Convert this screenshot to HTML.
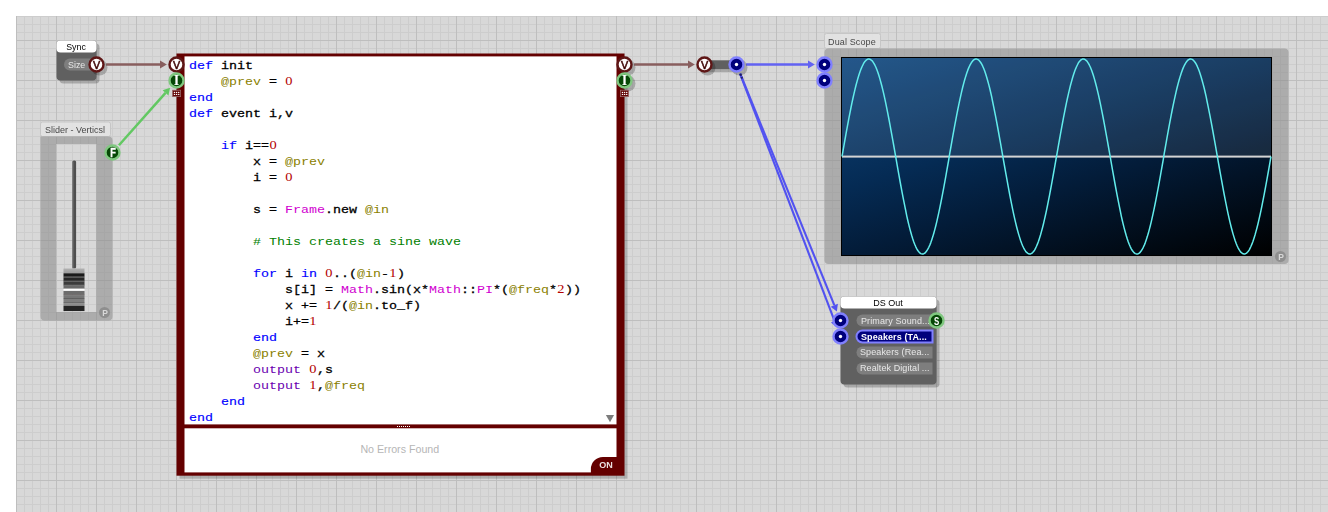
<!DOCTYPE html>
<html><head><meta charset="utf-8"><title>Ruby sine wave schematic</title>
<style>
html,body{margin:0;padding:0;background:#fff;}
body{width:1328px;height:512px;overflow:hidden;position:relative;font-family:"Liberation Sans",sans-serif;}
#cv{position:absolute;left:16px;top:16px;width:1312px;height:496px;background-color:#d8d8d8;
background-image:
 linear-gradient(to right,#bebebe 1px,transparent 1px),
 linear-gradient(to bottom,#bebebe 1px,transparent 1px),
 linear-gradient(to right,#cdcdcd 1px,transparent 1px),
 linear-gradient(to bottom,#cdcdcd 1px,transparent 1px);
background-size:40px 40px,40px 40px,8px 8px,8px 8px;
background-position:0 0,0 24px,0 0,0 0;}
.abs{position:absolute;}
.t{position:absolute;white-space:nowrap;font-size:9px;line-height:12px;will-change:transform;}
pre{margin:0;position:absolute;left:189.0px;top:58.3px;font-family:"Liberation Mono",monospace;font-size:11.6px;line-height:16px;color:#000;transform:scaleX(1.1494);transform-origin:0 0;}
pre div{height:16px;white-space:pre;}
pre{-webkit-text-stroke:0.28px #000;}
pre b{font-weight:normal;-webkit-text-stroke:0 transparent;}
.k{color:#0000ff;-webkit-text-stroke:0.15px #0000ff;} .a{color:#8a8000;} .n{color:#b40000;font-family:"Liberation Serif",serif;font-size:12.6px;line-height:0;margin:0 0.33px;} .c{color:#d000d0;} .m{color:#008000;} .o{color:#6a00b0;}
</style></head><body>
<div id="cv"></div>
<svg class="abs" style="left:0;top:0;" width="1328" height="512" viewBox="0 0 1328 512">
<defs>
<linearGradient id="sg" gradientUnits="userSpaceOnUse" x1="1010.6" y1="6.5" x2="1102.4" y2="306.5">
<stop offset="0" stop-color="rgb(16,72,128)"/><stop offset="0.4" stop-color="rgb(5,43,84)"/><stop offset="0.6" stop-color="rgb(3,28,57)"/><stop offset="1" stop-color="rgb(0,0,0)"/>
</linearGradient>
<linearGradient id="kt" x1="0" y1="0" x2="0" y2="1"><stop offset="0" stop-color="#b2b2b2"/><stop offset="1" stop-color="#9a9a9a"/></linearGradient>
</defs>
<rect x="59.5" y="43.5" width="40" height="40" rx="4" ry="4" fill="#000" fill-opacity="0.22"/>
<rect x="56.5" y="40.5" width="40" height="40" rx="4" ry="4" fill="#606060"/>
<rect x="56.5" y="40.5" width="40" height="12" rx="4" ry="4" fill="#fff"/>
<path d="M70 58.5 H96.5 V70.5 H70 A6 6 0 0 1 70 58.5 Z" fill="#7e7e7e"/>
<rect x="40.5" y="122" width="70" height="14.5" rx="2" ry="2" fill="#e3e3e3" fill-opacity="0.92" stroke="#c6c6c6" stroke-width="1"/>
<path fill-rule="evenodd" fill="#8b8b8b" fill-opacity="0.58" d="M40.5 136.5 H108.5 A4 4 0 0 1 112.5 140.5 V316.5 A4 4 0 0 1 108.5 320.5 H44.5 A4 4 0 0 1 40.5 316.5 Z M56 144 V312 H96.5 V144 Z"/>
<rect x="72.4" y="160.5" width="3.7" height="108" rx="1.5" fill="#4e4e4e"/>
<rect x="72.4" y="161.5" width="1" height="107" fill="#7a7a7a"/>
<rect x="63.5" y="268.5" width="21" height="4.85" fill="url(#kt)"/><rect x="63.5" y="273.3" width="21" height="3.45" fill="#1a1a1a"/><rect x="63.5" y="276.7" width="21" height="1.05" fill="#4a4a4a"/><rect x="63.5" y="277.7" width="21" height="3.15" fill="#262626"/><rect x="63.5" y="280.8" width="21" height="0.75" fill="#484848"/><rect x="63.5" y="281.5" width="21" height="3.35" fill="#3c3c3c"/><rect x="63.5" y="284.8" width="21" height="0.75" fill="#2a2a2a"/><rect x="63.5" y="285.5" width="21" height="3.25" fill="#6a6a6a"/><rect x="63.5" y="288.7" width="21" height="2.25" fill="#ffffff"/><rect x="63.5" y="290.9" width="21" height="3.65" fill="#6c6c6c"/><rect x="63.5" y="294.5" width="21" height="0.65" fill="#484040"/><rect x="63.5" y="295.1" width="21" height="3.25" fill="#767676"/><rect x="63.5" y="298.3" width="21" height="0.75" fill="#3c3c3c"/><rect x="63.5" y="299.0" width="21" height="3.45" fill="#7e7e7e"/><rect x="63.5" y="302.4" width="21" height="0.75" fill="#404040"/><rect x="63.5" y="303.1" width="21" height="2.85" fill="#8c8c8c"/><rect x="63.5" y="305.9" width="21" height="5.15" fill="#242424"/>
<circle cx="104.5" cy="312.5" r="5.5" fill="#8e8e8e"/>
<rect x="179.5" y="56.5" width="448" height="422.2" fill="#000" fill-opacity="0.19"/>
<rect x="176.5" y="53.5" width="448" height="422.2" fill="#640000"/>
<rect x="184.5" y="56.4" width="432" height="368" fill="#fff"/>
<rect x="184.5" y="428.3" width="432" height="44.1" fill="#fff"/>
<path d="M590.9 473 L590.9 469 A12 12 0 0 1 602.9 456.9 L618 456.9 L618 473 Z" fill="#640000"/>
<polygon points="605.9,415 614.1,415 610,422.2" fill="#7c7c7c"/>
<rect x="397" y="426" width="1" height="1" fill="#fff"/>
<rect x="399" y="426" width="1" height="1" fill="#fff"/>
<rect x="401" y="426" width="1" height="1" fill="#fff"/>
<rect x="403" y="426" width="1" height="1" fill="#fff"/>
<rect x="405" y="426" width="1" height="1" fill="#fff"/>
<rect x="407" y="426" width="1" height="1" fill="#fff"/>
<rect x="409" y="426" width="1" height="1" fill="#fff"/>
<rect x="707.5" y="63.3" width="32" height="8.8" fill="#000" fill-opacity="0.22"/>
<rect x="704.5" y="60.3" width="32" height="8.8" fill="#606060"/>
<rect x="824.5" y="33.5" width="56" height="15" rx="2" ry="2" fill="#e3e3e3" fill-opacity="0.92" stroke="#c6c6c6" stroke-width="1"/>
<rect x="824.5" y="48.5" width="464" height="215.5" rx="4" ry="4" fill="#8b8b8b" fill-opacity="0.58"/>
<rect x="841" y="57" width="431" height="199" fill="#000"/>
<rect x="842" y="58" width="429" height="197" fill="url(#sg)"/>
<rect x="842" y="58" width="429" height="98" fill="#fff" fill-opacity="0.087"/>
<rect x="842" y="155.6" width="429" height="2" fill="#d4d4d4"/>
<circle cx="1280.5" cy="256.5" r="5.5" fill="#8e8e8e"/>
<rect x="843.5" y="299.5" width="96" height="88" rx="4" ry="4" fill="#000" fill-opacity="0.22"/>
<rect x="840.5" y="296.5" width="96" height="88" rx="4" ry="4" fill="#606060"/>
<rect x="840.5" y="296.5" width="96" height="12" rx="4" ry="4" fill="#fff"/>
<path d="M862.5 314.5 H932.5 V326.5 H862.5 A6 6 0 0 1 862.5 314.5 Z" fill="#7e7e7e"/>
<path d="M862.5 346.5 H932.5 V358.5 H862.5 A6 6 0 0 1 862.5 346.5 Z" fill="#7e7e7e"/>
<path d="M862.5 362.5 H932.5 V374.5 H862.5 A6 6 0 0 1 862.5 362.5 Z" fill="#7e7e7e"/>
<path d="M862.5 330.5 H932.5 V342.5 H862.5 A6 6 0 0 1 862.5 330.5 Z" fill="#00007c" stroke="#8080ff" stroke-width="2"/>
</svg>

<!-- module labels -->
<div class="t" style="left:56.2px;top:40.5px;width:40px;text-align:center;color:#000;font-size:8.8px;">Sync</div>
<div class="t" style="left:68.2px;top:58.5px;color:#e8e8e8;font-size:8.9px;">Size</div>
<div class="t" style="left:44.5px;top:123.5px;color:#484848;">Slider - Verticsl</div>
<div class="t" style="left:101.5px;top:306.5px;width:6px;text-align:center;color:#d8d8d8;font-weight:bold;font-size:8.5px;">P</div>
<div class="t" style="left:827.8px;top:36px;color:#484848;letter-spacing:0.13px;">Dual Scope</div>
<div class="t" style="left:1277.5px;top:250.5px;width:6px;text-align:center;color:#d8d8d8;font-weight:bold;font-size:8.5px;">P</div>
<div class="t" style="left:839.5px;top:296.9px;width:96px;text-align:center;color:#000;">DS Out</div>
<div class="t" style="left:860.5px;top:314.7px;color:#e8e8e8;letter-spacing:0.12px;">Primary Sound...</div>
<div class="t" style="left:860.6px;top:330.5px;color:#fff;font-weight:bold;letter-spacing:0.1px;">Speakers (TA...</div>
<div class="t" style="left:859.8px;top:346.3px;color:#e8e8e8;letter-spacing:0.12px;">Speakers (Rea...</div>
<div class="t" style="left:859.8px;top:362.4px;color:#e8e8e8;letter-spacing:0.08px;">Realtek Digital ...</div>

<!-- Ruby code -->
<pre><div><b class="k">def</b> init</div><div>    <b class="a">@prev</b> = <b class="n">0</b></div><div><b class="k">end</b></div><div><b class="k">def</b> event i,v</div><div></div><div>    <b class="k">if</b> i==<b class="n">0</b></div><div>        x = <b class="a">@prev</b></div><div>        i = <b class="n">0</b></div><div></div><div>        s = <b class="c">Frame</b>.new <b class="a">@in</b></div><div></div><div>        <b class="m"># This creates a sine wave</b></div><div></div><div>        <b class="k">for</b> i <b class="k">in</b> <b class="n">0</b>..(<b class="a">@in</b>-<b class="n">1</b>)</div><div>            s[i] = <b class="c">Math</b>.sin(x*<b class="c">Math</b>::<b class="c">PI</b>*(<b class="a">@freq</b>*<b class="n">2</b>))</div><div>            x += <b class="n">1</b>/(<b class="a">@in</b>.to_f)</div><div>            i+=<b class="n">1</b></div><div>        <b class="k">end</b></div><div>        <b class="a">@prev</b> = x</div><div>        <b class="o">output</b> <b class="n">0</b>,s</div><div>        <b class="o">output</b> <b class="n">1</b>,<b class="a">@freq</b></div><div>    <b class="k">end</b></div><div><b class="k">end</b></div></pre>
<div class="abs" style="left:183.8px;top:443px;width:432px;text-align:center;font-size:10.67px;color:#b6b6b6;line-height:12px;">No Errors Found</div>
<div class="t" style="left:599px;top:459px;width:14px;color:#ece2e2;font-weight:bold;text-align:center;">ON</div>

<svg class="abs" style="left:0;top:0;will-change:transform;" width="1328" height="512" viewBox="0 0 1328 512">
<path d="M842.0,156.5 L843.0,150.8 L844.0,145.1 L845.0,139.5 L846.0,133.9 L847.0,128.4 L848.0,123.0 L849.0,117.7 L850.0,112.6 L851.0,107.5 L852.0,102.7 L853.0,98.0 L854.0,93.6 L855.0,89.3 L856.0,85.3 L857.0,81.6 L858.0,78.0 L859.0,74.8 L860.0,71.8 L861.0,69.1 L862.0,66.8 L863.0,64.7 L863.9,62.9 L864.9,61.5 L865.9,60.4 L866.9,59.6 L867.9,59.1 L868.9,59.0 L869.9,59.2 L870.9,59.8 L871.9,60.6 L872.9,61.8 L873.9,63.3 L874.9,65.2 L875.9,67.3 L876.9,69.8 L877.9,72.5 L878.9,75.6 L879.9,78.9 L880.9,82.5 L881.9,86.3 L882.9,90.4 L883.9,94.7 L884.9,99.2 L885.9,103.9 L886.9,108.8 L887.9,113.8 L888.9,119.0 L889.9,124.3 L890.9,129.8 L891.9,135.3 L892.9,140.9 L893.9,146.5 L894.9,152.2 L895.9,157.9 L896.9,163.6 L897.9,169.3 L898.9,174.9 L899.9,180.5 L900.9,186.0 L901.9,191.3 L902.9,196.6 L903.9,201.7 L904.9,206.7 L905.9,211.5 L906.8,216.1 L907.8,220.5 L908.8,224.7 L909.8,228.6 L910.8,232.3 L911.8,235.8 L912.8,239.0 L913.8,241.9 L914.8,244.5 L915.8,246.8 L916.8,248.8 L917.8,250.5 L918.8,251.8 L919.8,252.9 L920.8,253.6 L921.8,253.9 L922.8,254.0 L923.8,253.7 L924.8,253.1 L925.8,252.1 L926.8,250.8 L927.8,249.2 L928.8,247.3 L929.8,245.1 L930.8,242.6 L931.8,239.7 L932.8,236.6 L933.8,233.2 L934.8,229.6 L935.8,225.7 L936.8,221.6 L937.8,217.2 L938.8,212.7 L939.8,207.9 L940.8,203.0 L941.8,197.9 L942.8,192.7 L943.8,187.3 L944.8,181.8 L945.8,176.3 L946.8,170.7 L947.8,165.0 L948.8,159.3 L949.7,153.7 L950.7,148.0 L951.7,142.3 L952.7,136.7 L953.7,131.2 L954.7,125.7 L955.7,120.3 L956.7,115.1 L957.7,110.0 L958.7,105.1 L959.7,100.3 L960.7,95.8 L961.7,91.4 L962.7,87.3 L963.7,83.4 L964.7,79.8 L965.7,76.4 L966.7,73.3 L967.7,70.4 L968.7,67.9 L969.7,65.7 L970.7,63.8 L971.7,62.2 L972.7,60.9 L973.7,59.9 L974.7,59.3 L975.7,59.0 L976.7,59.1 L977.7,59.4 L978.7,60.1 L979.7,61.2 L980.7,62.5 L981.7,64.2 L982.7,66.2 L983.7,68.5 L984.7,71.1 L985.7,74.0 L986.7,77.2 L987.7,80.7 L988.7,84.4 L989.7,88.3 L990.7,92.5 L991.7,96.9 L992.6,101.5 L993.6,106.3 L994.6,111.3 L995.6,116.4 L996.6,121.7 L997.6,127.0 L998.6,132.5 L999.6,138.1 L1000.6,143.7 L1001.6,149.4 L1002.6,155.1 L1003.6,160.8 L1004.6,166.5 L1005.6,172.1 L1006.6,177.7 L1007.6,183.2 L1008.6,188.7 L1009.6,194.0 L1010.6,199.2 L1011.6,204.2 L1012.6,209.1 L1013.6,213.8 L1014.6,218.3 L1015.6,222.6 L1016.6,226.7 L1017.6,230.5 L1018.6,234.1 L1019.6,237.4 L1020.6,240.5 L1021.6,243.2 L1022.6,245.7 L1023.6,247.8 L1024.6,249.7 L1025.6,251.2 L1026.6,252.4 L1027.6,253.2 L1028.6,253.8 L1029.6,254.0 L1030.6,253.9 L1031.6,253.4 L1032.6,252.6 L1033.6,251.5 L1034.6,250.1 L1035.5,248.3 L1036.5,246.2 L1037.5,243.9 L1038.5,241.2 L1039.5,238.2 L1040.5,235.0 L1041.5,231.4 L1042.5,227.7 L1043.5,223.7 L1044.5,219.4 L1045.5,215.0 L1046.5,210.3 L1047.5,205.5 L1048.5,200.4 L1049.5,195.3 L1050.5,190.0 L1051.5,184.6 L1052.5,179.1 L1053.5,173.5 L1054.5,167.9 L1055.5,162.2 L1056.5,156.5 L1057.5,150.8 L1058.5,145.1 L1059.5,139.5 L1060.5,133.9 L1061.5,128.4 L1062.5,123.0 L1063.5,117.7 L1064.5,112.6 L1065.5,107.5 L1066.5,102.7 L1067.5,98.0 L1068.5,93.6 L1069.5,89.3 L1070.5,85.3 L1071.5,81.6 L1072.5,78.0 L1073.5,74.8 L1074.5,71.8 L1075.5,69.1 L1076.5,66.8 L1077.5,64.7 L1078.4,62.9 L1079.4,61.5 L1080.4,60.4 L1081.4,59.6 L1082.4,59.1 L1083.4,59.0 L1084.4,59.2 L1085.4,59.8 L1086.4,60.6 L1087.4,61.8 L1088.4,63.3 L1089.4,65.2 L1090.4,67.3 L1091.4,69.8 L1092.4,72.5 L1093.4,75.6 L1094.4,78.9 L1095.4,82.5 L1096.4,86.3 L1097.4,90.4 L1098.4,94.7 L1099.4,99.2 L1100.4,103.9 L1101.4,108.8 L1102.4,113.8 L1103.4,119.0 L1104.4,124.3 L1105.4,129.8 L1106.4,135.3 L1107.4,140.9 L1108.4,146.5 L1109.4,152.2 L1110.4,157.9 L1111.4,163.6 L1112.4,169.3 L1113.4,174.9 L1114.4,180.5 L1115.4,186.0 L1116.4,191.3 L1117.4,196.6 L1118.4,201.7 L1119.4,206.7 L1120.4,211.5 L1121.3,216.1 L1122.3,220.5 L1123.3,224.7 L1124.3,228.6 L1125.3,232.3 L1126.3,235.8 L1127.3,239.0 L1128.3,241.9 L1129.3,244.5 L1130.3,246.8 L1131.3,248.8 L1132.3,250.5 L1133.3,251.8 L1134.3,252.9 L1135.3,253.6 L1136.3,253.9 L1137.3,254.0 L1138.3,253.7 L1139.3,253.1 L1140.3,252.1 L1141.3,250.8 L1142.3,249.2 L1143.3,247.3 L1144.3,245.1 L1145.3,242.6 L1146.3,239.7 L1147.3,236.6 L1148.3,233.2 L1149.3,229.6 L1150.3,225.7 L1151.3,221.6 L1152.3,217.2 L1153.3,212.7 L1154.3,207.9 L1155.3,203.0 L1156.3,197.9 L1157.3,192.7 L1158.3,187.3 L1159.3,181.8 L1160.3,176.3 L1161.3,170.7 L1162.3,165.0 L1163.3,159.3 L1164.2,153.7 L1165.2,148.0 L1166.2,142.3 L1167.2,136.7 L1168.2,131.2 L1169.2,125.7 L1170.2,120.3 L1171.2,115.1 L1172.2,110.0 L1173.2,105.1 L1174.2,100.3 L1175.2,95.8 L1176.2,91.4 L1177.2,87.3 L1178.2,83.4 L1179.2,79.8 L1180.2,76.4 L1181.2,73.3 L1182.2,70.4 L1183.2,67.9 L1184.2,65.7 L1185.2,63.8 L1186.2,62.2 L1187.2,60.9 L1188.2,59.9 L1189.2,59.3 L1190.2,59.0 L1191.2,59.1 L1192.2,59.4 L1193.2,60.1 L1194.2,61.2 L1195.2,62.5 L1196.2,64.2 L1197.2,66.2 L1198.2,68.5 L1199.2,71.1 L1200.2,74.0 L1201.2,77.2 L1202.2,80.7 L1203.2,84.4 L1204.2,88.3 L1205.2,92.5 L1206.2,96.9 L1207.1,101.5 L1208.1,106.3 L1209.1,111.3 L1210.1,116.4 L1211.1,121.7 L1212.1,127.0 L1213.1,132.5 L1214.1,138.1 L1215.1,143.7 L1216.1,149.4 L1217.1,155.1 L1218.1,160.8 L1219.1,166.5 L1220.1,172.1 L1221.1,177.7 L1222.1,183.2 L1223.1,188.7 L1224.1,194.0 L1225.1,199.2 L1226.1,204.2 L1227.1,209.1 L1228.1,213.8 L1229.1,218.3 L1230.1,222.6 L1231.1,226.7 L1232.1,230.5 L1233.1,234.1 L1234.1,237.4 L1235.1,240.5 L1236.1,243.2 L1237.1,245.7 L1238.1,247.8 L1239.1,249.7 L1240.1,251.2 L1241.1,252.4 L1242.1,253.2 L1243.1,253.8 L1244.1,254.0 L1245.1,253.9 L1246.1,253.4 L1247.1,252.6 L1248.1,251.5 L1249.1,250.1 L1250.0,248.3 L1251.0,246.2 L1252.0,243.9 L1253.0,241.2 L1254.0,238.2 L1255.0,235.0 L1256.0,231.4 L1257.0,227.7 L1258.0,223.7 L1259.0,219.4 L1260.0,215.0 L1261.0,210.3 L1262.0,205.5 L1263.0,200.4 L1264.0,195.3 L1265.0,190.0 L1266.0,184.6 L1267.0,179.1 L1268.0,173.5 L1269.0,167.9 L1270.0,162.2 L1271.0,156.5" fill="none" stroke="#62ecec" stroke-width="1.5" stroke-linejoin="round"/>
<line x1="106.20" y1="64.50" x2="160.00" y2="64.50" stroke="#885e5e" stroke-width="2.5"/><polygon points="166.80,64.50 160.00,68.40 160.00,60.60" fill="#885e5e"/>
<line x1="634.20" y1="64.50" x2="688.00" y2="64.50" stroke="#885e5e" stroke-width="2.5"/><polygon points="694.80,64.50 688.00,68.40 688.00,60.60" fill="#885e5e"/>
<line x1="118.94" y1="145.25" x2="165.54" y2="92.83" stroke="#62c862" stroke-width="2.5"/><polygon points="170.06,87.75 168.45,95.42 162.62,90.24" fill="#62c862"/>
<line x1="746.20" y1="64.50" x2="808.00" y2="64.50" stroke="#6262f2" stroke-width="2.5"/><polygon points="814.80,64.50 808.00,68.40 808.00,60.60" fill="#6262f2"/>
<line x1="740.15" y1="73.49" x2="834.29" y2="305.21" stroke="#5252f0" stroke-width="2.1"/><polygon points="836.85,311.51 830.68,306.68 837.90,303.75" fill="#5252f0"/>
<line x1="739.96" y1="73.56" x2="834.61" y2="321.09" stroke="#5252f0" stroke-width="2.1"/><polygon points="837.04,327.44 830.96,322.48 838.25,319.70" fill="#5252f0"/>
<line x1="740.3" y1="73.8" x2="742.3" y2="78.7" stroke="#1c1c60" stroke-width="2.2" stroke-opacity="0.8" stroke-dasharray="2.2 1.2"/>
<circle cx="99.5" cy="67.5" r="8" fill="#000" fill-opacity="0.22"/><circle cx="96.5" cy="64.5" r="7" fill="#fff" stroke="#5e1616" stroke-width="2.4"/><text x="96.5" y="68.5" text-anchor="middle" font-family="Liberation Sans, sans-serif" font-size="10.8" fill="#400808" stroke="#400808" stroke-width="0.55">V</text>
<circle cx="176.5" cy="64.5" r="7" fill="#fff" stroke="#5e1616" stroke-width="2.4"/><text x="176.5" y="68.5" text-anchor="middle" font-family="Liberation Sans, sans-serif" font-size="10.8" fill="#400808" stroke="#400808" stroke-width="0.55">V</text>
<circle cx="176.5" cy="80.5" r="7" fill="#064806" stroke="#80c880" stroke-width="2.4"/><text x="176.5" y="85.3" text-anchor="middle" font-family="Liberation Serif, serif" font-weight="bold" font-size="14.2" fill="#fff">I</text>
<circle cx="627.5" cy="67.5" r="8" fill="#000" fill-opacity="0.22"/><circle cx="624.5" cy="64.5" r="7" fill="#fff" stroke="#5e1616" stroke-width="2.4"/><text x="624.5" y="68.5" text-anchor="middle" font-family="Liberation Sans, sans-serif" font-size="10.8" fill="#400808" stroke="#400808" stroke-width="0.55">V</text>
<circle cx="627.5" cy="83.5" r="8" fill="#000" fill-opacity="0.22"/><circle cx="624.5" cy="80.5" r="7" fill="#064806" stroke="#80c880" stroke-width="2.4"/><text x="624.5" y="85.3" text-anchor="middle" font-family="Liberation Serif, serif" font-weight="bold" font-size="14.2" fill="#fff">I</text>
<circle cx="112.5" cy="152.5" r="7" fill="#064806" stroke="#80c880" stroke-width="2.4"/><text transform="translate(113.1,157.0) scale(0.74,1)" text-anchor="middle" font-family="Liberation Sans, sans-serif" font-weight="bold" font-size="12.4" fill="#fff" stroke="#fff" stroke-width="0.35">F</text>
<circle cx="707.5" cy="67.5" r="8" fill="#000" fill-opacity="0.22"/><circle cx="704.5" cy="64.5" r="7" fill="#fff" stroke="#5e1616" stroke-width="2.4"/><text x="704.5" y="68.5" text-anchor="middle" font-family="Liberation Sans, sans-serif" font-size="10.8" fill="#400808" stroke="#400808" stroke-width="0.55">V</text>
<circle cx="739.5" cy="67.5" r="8" fill="#000" fill-opacity="0.22"/><circle cx="736.5" cy="64.5" r="7" fill="#00007c" stroke="#8080ff" stroke-width="2.4"/><circle cx="736.5" cy="64.5" r="1.7" fill="#fff"/>
<circle cx="824.5" cy="64.5" r="7" fill="#00007c" stroke="#8080ff" stroke-width="2.4"/><circle cx="824.5" cy="64.5" r="1.7" fill="#fff"/>
<circle cx="824.5" cy="80.5" r="7" fill="#00007c" stroke="#8080ff" stroke-width="2.4"/><circle cx="824.5" cy="80.5" r="1.7" fill="#fff"/>
<circle cx="840.5" cy="320.5" r="7" fill="#00007c" stroke="#8080ff" stroke-width="2.4"/><circle cx="840.5" cy="320.5" r="1.7" fill="#fff"/>
<circle cx="840.5" cy="336.5" r="7" fill="#00007c" stroke="#8080ff" stroke-width="2.4"/><circle cx="840.5" cy="336.5" r="1.7" fill="#fff"/>
<circle cx="936.5" cy="320.5" r="7" fill="#064806" stroke="#80c880" stroke-width="2.4"/><text transform="translate(936.6,324.8) scale(0.7,1)" text-anchor="middle" font-family="Liberation Sans, sans-serif" font-weight="bold" font-size="11.2" fill="#fff">S</text>
<rect x="172.6" y="90.2" width="8" height="6.4" fill="#640808" stroke="#986868" stroke-width="0.8"/><circle cx="174.5" cy="92.4" r="0.72" fill="#fff"/><circle cx="176.6" cy="92.4" r="0.72" fill="#fff"/><circle cx="178.7" cy="92.4" r="0.72" fill="#fff"/><circle cx="174.5" cy="94.4" r="0.72" fill="#fff"/><circle cx="176.6" cy="94.4" r="0.72" fill="#fff"/><circle cx="178.7" cy="94.4" r="0.72" fill="#fff"/>
<rect x="620.6" y="90.2" width="8" height="6.4" fill="#640808" stroke="#986868" stroke-width="0.8"/><circle cx="622.5" cy="92.4" r="0.72" fill="#fff"/><circle cx="624.6" cy="92.4" r="0.72" fill="#fff"/><circle cx="626.7" cy="92.4" r="0.72" fill="#fff"/><circle cx="622.5" cy="94.4" r="0.72" fill="#fff"/><circle cx="624.6" cy="94.4" r="0.72" fill="#fff"/><circle cx="626.7" cy="94.4" r="0.72" fill="#fff"/>
</svg>
</body></html>
